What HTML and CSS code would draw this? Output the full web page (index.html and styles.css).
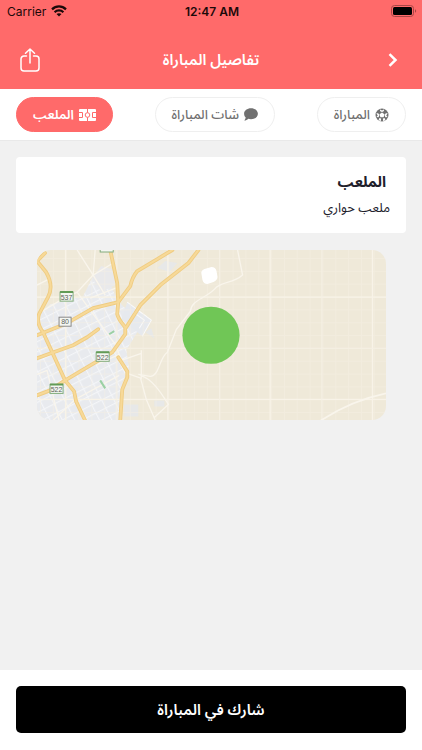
FILE: index.html
```html
<!DOCTYPE html>
<html lang="ar" dir="rtl">

<head>
  <meta charset="UTF-8"/>
  <meta name="viewport" content="width=device-width, initial-scale=1.0"/>
  <title>تفاصيل المباراة</title>
  <link rel="stylesheet" href="styles.css">
</head>

<body>
<header class="header">
  <div class="status" dir="ltr">
    <div class="carrier">
      <span>Carrier</span>
      <svg width="16" height="12" viewBox="0 0 16 12" fill="none" stroke="#1b0909" stroke-width="2.2">
        <path d="M1 4.4C5 .4 11 .4 15 4.4"/>
        <path d="M3.6 7.2c2.5-2.4 6.300-2.400 8.800 0"/>
        <path d="M8 11.600 5.500 9.100c1.400-1.300 3.600-1.300 5 0z" fill="#1b0909" stroke="none"/>
      </svg>
    </div>
    <time class="clock">12:47 AM</time>
    <svg class="battery" width="26" height="12" viewBox="0 0 26 12">
      <rect x=".5" y=".5" width="22" height="11" rx="3" fill="none" stroke="#a84646"/>
      <rect x="2" y="2" width="19" height="8" rx="1.500" fill="#000"/>
      <path d="M24 4.200c1.600.6 1.600 3 0 3.600z" fill="#a84646"/>
    </svg>
  </div>
  <div class="navbar">
    <button class="icon-btn" aria-label="رجوع">
      <svg width="10" height="14" viewBox="0 0 10 14" fill="none" stroke="#fff" stroke-width="2.500">
        <path d="M1.500 1.200 7.500 7l-6 5.800"/>
      </svg>
    </button>
    <h1 class="title">تفاصيل المباراة</h1>
    <button class="icon-btn" aria-label="مشاركة">
      <svg width="20" height="24" viewBox="0 0 20 24" fill="none" stroke="#fff" stroke-width="1.500" stroke-linecap="round" stroke-linejoin="round">
        <path d="M6.500 8H4a3 3 0 0 0-3 3v9a3 3 0 0 0 3 3h12a3 3 0 0 0 3-3v-9a3 3 0 0 0-3-3h-2.500M10 15V1M5.500 5.300 10 1l4.500 4.300"/>
      </svg>
    </button>
  </div>
</header>

<nav class="tabs">
  <button class="tab">
    <svg width="14" height="14" viewBox="0 0 14 14">
      <circle cx="7" cy="7" r="6.500" fill="#707070"/>
      <g fill="#fff">
        <path d="M7 4.400 9.500 6.200 8.600 9.200H5.400L4.500 6.200z"/>
        <path d="M4.700 1.300 7 2.500l2.300-1.200-.6 2L7 4 5.300 3.300z"/>
        <path d="M12.700 5.200 11.200 7.400l1.400 1.500-2.200.3-.8-2.200 1.200-1.800z"/>
        <path d="M1.300 5.200 2.800 7.400 1.400 8.900l2.200.3.800-2.200-1.200-1.800z"/>
        <path d="M10.500 12.200 9.600 9.900l-1.700.6.200 2.500z"/>
        <path d="M3.500 12.200 4.400 9.900l1.700.6-.2 2.500z"/>
      </g>
    </svg>
    المباراة
  </button>
  <button class="tab">
    <svg width="14" height="13" viewBox="0 0 14 13" fill="#707070">
      <path d="M7 .2c3.900 0 6.900 2.400 6.900 5.500S10.900 11.200 7 11.200c-1 0-1.900-.1-2.700-.4C3.300 11.700 1.800 12.600.3 12.600c.8-.9 1.300-1.900 1.400-3C.7 8.600.1 7.200.1 5.700.1 2.600 3.100.2 7 .2z"/>
    </svg>
    شات المباراة
  </button>
  <button class="tab active">
    <svg width="17" height="12" viewBox="0 0 17 12">
      <rect width="17" height="12" rx="1" fill="#fff"/>
      <g fill="none" stroke="#ff6a6a">
        <path d="M8.500 0v3.700m0 4.600V12M0 3.500h3.500v5H0m17-5h-3.500v5H17"/>
        <circle cx="8.500" cy="6" r="2.300"/>
      </g>
    </svg>
    الملعب
  </button>
</nav>

<main class="content">
  <section class="card">
    <h2>الملعب</h2>
    <p>ملعب حواري</p>
  </section>

  <svg class="map" viewBox="0 0 348 170" preserveAspectRatio="xMidYMid slice" direction="ltr">
    <defs>
      <pattern id="minor" x="3" y="8" width="12.800" height="12.800" patternUnits="userSpaceOnUse">
        <path d="M0 .5h12.800M.5 0v12.800" stroke="#f5f0e4" stroke-width="1" opacity=".5"/>
      </pattern>
      <pattern id="streets" width="11" height="9" patternUnits="userSpaceOnUse" patternTransform="rotate(-27)">
        <path d="M0 .5h11M.5 0v9" stroke="#f8f9fb" stroke-width="1.200"/>
      </pattern>
    </defs>
    <rect width="348" height="170" fill="#efe9d9"/>

    <!-- built up area -->
    <g id="town">
      <path d="M0 64 14 54l32-8 9-18 18 6 7 16 14 14 6 18-11 18 3 19-7 12v39H0z" fill="#e8eaee"/>
      <path d="M0 64 14 54l32-8 9-18 18 6 7 16 14 14 6 18-11 18 3 19-7 12v39H0z" fill="url(#streets)" opacity=".75"/>
      <path d="m55 28 9-12 13 4 3 14-16 8z" fill="#e9e9eb"/>
      <path d="m90 52 24 18-9 16-21-17z" fill="#e6e9ee"/>
      <path d="m90 52 24 18-9 16M96 62l11 8-5 8m-2-18 9 6" fill="none" stroke="#fafafa"/>
      <path d="m108 82 6-4 3 10zM120 18l8-7 12 2-8 9zM117 150h10v6h-10zM87 154h14v12H87z" fill="#e5e7eb" opacity=".8"/>
    </g>

    <rect width="348" height="170" fill="url(#minor)"/>
    <path d="M28.500 0v170M130.500 0v170M232.500 0v170M334.500 0v170M0 47h348M0 149h348" stroke="#f8f3e8" stroke-width="1.300"/>
    <path d="M0 98h348M79 0v170M182 0v170M284 0v170" stroke="#f5f0e4"/>

    <!-- small roads -->
    <g fill="none" stroke="#f9f5ec" stroke-width="1.300">
      <path d="m58 0-2 25-16 17-18 9-22 13"/>
      <path d="m40 0 16 25 12 20m-12-20 20-12M40 42l38 52 12 30M0 35l12-6"/>
      <path d="M53 48 81 37M60 114 82 104M0 124l10-4 12 50M82 125l-44 24-22 21"/>
      <path d="m200 0 5 25c-10 9-21 6-28 14-10 10-23 11-24 22l-14 18-9 23c-8 5-8 24-17 24l-12-2"/>
      <path d="M103 125c11 3 20 16 28 29l-14 13m-14-40 6 22 9 21M90 123l14 5v-28M84 110l20-7"/>
      <path d="M283 170q31-20 65-27" stroke-width="1.800"/>
    </g>

    <!-- highways -->
    <g fill="none" stroke-linecap="round" stroke-linejoin="round">
      <g stroke="#efcc82" stroke-width="3.800">
        <path d="M8 3 0 11l9 11q8 14 2 25L2 64q-3 9 4 18l22 48 9 11 2 10 9 19"/>
        <path d="m73 0 7 33 1 19-1 12q1 5 8 13v7l-13 18-47 28-15 10-13 5"/>
        <path d="m135 0-15 9-20 12q-5 6-7 15L81 52l-25 6-26 15L0 85"/>
        <path d="m161 0-10 13-28 22-20 20-14 22"/>
        <path d="m81 107 9 14v6l-5 12-2 31"/>
        <path d="m0 108 36-13 14-8 11-8"/>
      </g>
      <g stroke="#f7d998" stroke-width="2">
        <path d="M8 3 0 11l9 11q8 14 2 25L2 64q-3 9 4 18l22 48 9 11 2 10 9 19"/>
        <path d="m73 0 7 33 1 19-1 12q1 5 8 13v7l-13 18-47 28-15 10-13 5"/>
        <path d="m135 0-15 9-20 12q-5 6-7 15L81 52l-25 6-26 15L0 85"/>
        <path d="m161 0-10 13-28 22-20 20-14 22"/>
        <path d="m81 107 9 14v6l-5 12-2 31"/>
        <path d="m0 108 36-13 14-8 11-8"/>
      </g>
    </g>
    <path d="m72 84 5-3m-14 49 5 8" stroke="#9bd0a4" stroke-width="2"/>

    <!-- road signs -->
    <g class="signs">
      <rect x="63" y="-7" width="13" height="9"/>
      <rect x="23" y="42" width="13" height="9"/>
      <rect x="59" y="102" width="13" height="9"/>
      <rect x="13" y="134" width="13" height="9"/>
      <rect class="sign-grey" x="22" y="67" width="12" height="9"/>
    </g>
    <path d="M23 42h13M59 102h13M13 134h13" stroke="#629b57" stroke-width="2"/>
    <g class="sign-text">
      <text x="29.500" y="50">537</text>
      <text x="65.500" y="110">522</text>
      <text x="19.500" y="142">522</text>
      <text x="28" y="74">80</text>
    </g>

    <path d="M164 24q-1-3 3-5l7-2q4 0 5 4l1 6q0 3-4 5l-6 2q-4 0-5-4z" fill="#fff"/>
    <circle cx="173.500" cy="85" r="28.500" fill="#70c656"/>
  </svg>
</main>

<footer class="footer">
  <button class="join-btn">شارك في المباراة</button>
</footer>
</body>

</html>
```

FILE: styles.css
```css
* {
  box-sizing: border-box;
}

body {
  margin: 0;
  min-height: 100vh;
  display: flex;
  flex-direction: column;
  background: #f1f1f1;
  color: #20202a;
  font-family: "Noto Sans Arabic", "DejaVu Sans", sans-serif;
}

h1, h2, p {
  margin: 0;
}

button {
  border: none;
  font-family: inherit;
  cursor: pointer;
}

svg {
  display: block;
  flex-shrink: 0;
}

.header {
  background: #ff6a6a;
  color: #fff;
}

.status {
  display: grid;
  grid-template-columns: 1fr auto 1fr;
  align-items: center;
  height: 22px;
  padding: 0 5px 0 7px;
  color: #1b0909;
  font: 12px Inter, sans-serif;
}

.carrier {
  display: flex;
  align-items: center;
  gap: 5px;
}

.clock {
  font-weight: 600;
}

.battery {
  justify-self: end;
}

.navbar {
  display: flex;
  align-items: center;
  justify-content: space-between;
  height: 67px;
  padding: 8px 20px 0;
}

.icon-btn {
  display: flex;
  align-items: center;
  min-width: 20px;
  padding: 0;
  background: none;
}

.icon-btn:first-child {
  padding-right: 4px;
}

.title {
  font-size: 15px;
  line-height: 24px;
  font-weight: 600;
}

.tabs {
  display: flex;
  align-items: center;
  justify-content: space-between;
  padding: 8px 16px;
  background: #fff;
  border-bottom: 1px solid #e9e9e9;
}

.tab {
  display: flex;
  align-items: center;
  gap: 5px;
  height: 35px;
  padding: 0 16px;
  border: 1px solid #efefef;
  border-radius: 18px;
  background: #fff;
  color: #707070;
  font-size: 13px;
  font-weight: 500;
}

.tab.active {
  background: #ff6a6a;
  border-color: #ff6a6a;
  color: #fff;
  font-weight: 600;
}

.content {
  flex: 1;
  padding: 16px;
}

.card {
  padding: 13px 16px;
  border-radius: 4px;
  background: #fff;
}

.card h2 {
  padding-right: 4px;
  font-size: 15px;
  line-height: 24px;
  font-weight: 700;
}

.card p {
  margin-top: 2px;
  font-size: 13px;
  line-height: 24px;
}

.map {
  width: calc(100% - 41px);
  margin: 17px auto 0;
  border-radius: 14px;
}

.signs {
  fill: #f4f6f1;
  stroke: #83ad7d;
}

.sign-grey {
  stroke: #8a8a8a;
}

.sign-text {
  fill: #5a625a;
  font: 7px "Liberation Sans", sans-serif;
  text-anchor: middle;
}

.footer {
  padding: 16px 16px 17px;
  background: #fff;
}

.join-btn {
  display: block;
  width: 100%;
  height: 47px;
  border-radius: 5px;
  background: #000;
  color: #fff;
  font-size: 15px;
  font-weight: 600;
}
```
